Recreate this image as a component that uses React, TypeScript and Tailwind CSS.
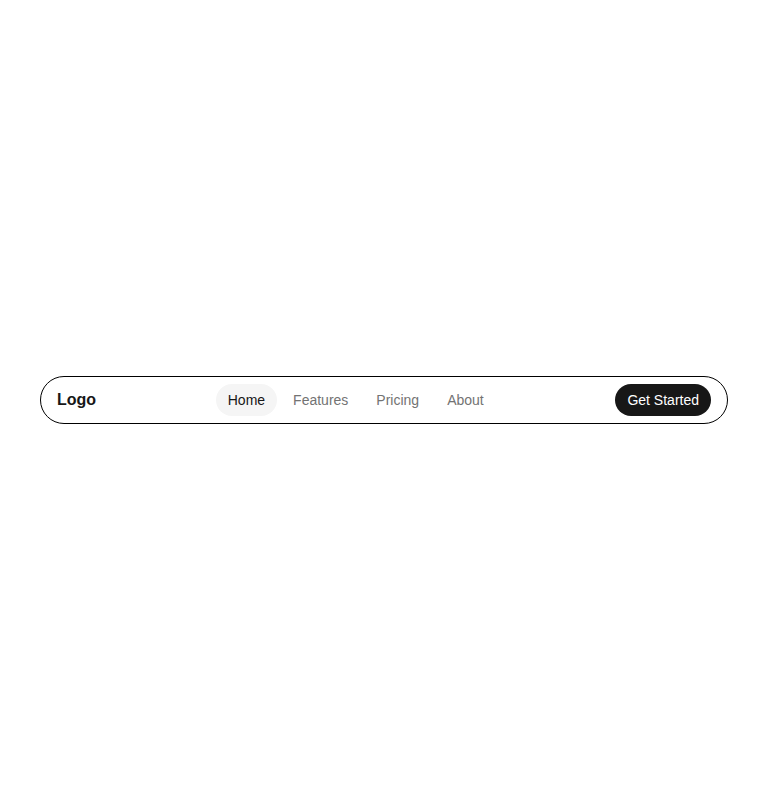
const links = ["Home", "Features", "Pricing", "About"];

export default function App() {
  return (
    <div className="min-h-screen flex items-center justify-center bg-white px-10 font-['Liberation_Sans',Arial,sans-serif]">
      <nav className="w-full h-12 flex items-center justify-between px-4 border border-black rounded-full bg-white">
        <span className="text-base font-bold text-neutral-900">Logo</span>
        <div className="flex items-center gap-1">
          {links.map((l, i) => (
            <a
              key={l}
              href="#"
              className={
                i === 0
                  ? "h-8 flex items-center px-3 rounded-full bg-neutral-100 text-sm text-neutral-900"
                  : "h-8 flex items-center px-3 rounded-full text-sm text-neutral-500"
              }
            >
              {l}
            </a>
          ))}
        </div>
        <button className="h-8 px-3 rounded-full bg-neutral-900 text-sm text-white">Get Started</button>
      </nav>
    </div>
  );
}
